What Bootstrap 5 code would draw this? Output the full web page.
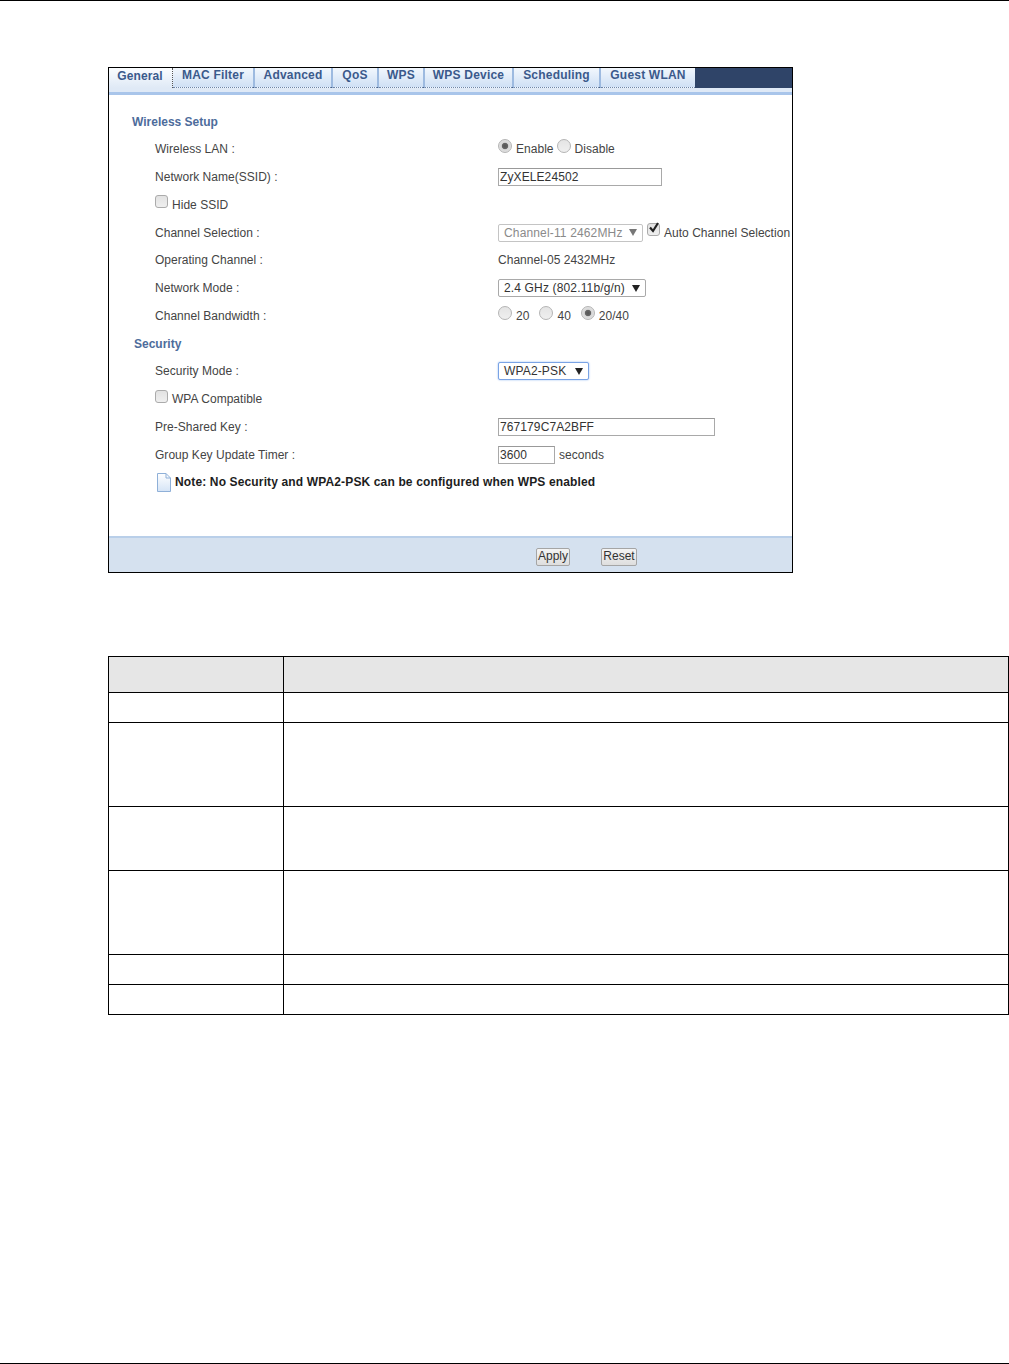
<!DOCTYPE html>
<html lang="en"><head><meta charset="utf-8"><title>Wireless General</title>
<link href="https://cdn.jsdelivr.net/npm/bootstrap@5.3.0/dist/css/bootstrap.min.css" rel="stylesheet">
<style>
body{background:#fff;font-family:"Liberation Sans",Arial,sans-serif;font-size:12px;color:#444;}
.sheet{height:1364px;border-top:1px solid #000;}
.footrule{margin-top:auto;height:1px;background:#000;}
.panel-box{margin:66px 0 0 108px;width:685px;height:506px;border:1px solid #000;background:#fff;}
.tabbar{height:20px;background:#2f4468;flex:none;}
.tab-item{height:20px;background:linear-gradient(#f2f7fd,#cfe0f5);border-right:2px solid #9dbae0;border-bottom:1px dotted #6f86a8;color:#3b5a8c;font-weight:700;letter-spacing:.2px;line-height:14px;padding:0;text-align:center;text-decoration:none;font-size:12px;}
.tab-item.is-on{background:linear-gradient(#fbfdff,#dfe9f6);color:#3b5a8c;border-right:1px dotted #555;border-bottom:0;line-height:15px;padding:1px 1px 0 0;width:64px;letter-spacing:.1px;}
.w1{width:82px}.w2{width:78px}.w3{width:46px}.w4{width:46px}.w5{width:89px}.w6{width:87px}.w7{width:94px;border-right:0}
.strip{height:7px;background:linear-gradient(#dfe9f6 0,#dfe9f6 4px,#a9c5ea 4px,#a9c5ea 100%);flex:none;}
.form-area{padding:12.7px 0 0 0;}
.frow{height:27.75px;padding-left:46px;letter-spacing:.03px;}
.flabel{width:343px;flex:none;}
.fhead{color:#4d6c9b;font-weight:700;letter-spacing:0;}
.h-a{padding-left:23px}.h-b{padding-left:25px}
.box-in{height:18px;border:1px solid #a9a9a9;border-top-color:#999;background:#fff;color:#333;font:12px "Liberation Sans",Arial,sans-serif;padding:0 1px;border-radius:0;letter-spacing:.1px;}
.in-ssid{width:164px}.in-psk{width:217px}.in-time{width:57px}
.drop{display:inline-flex;align-items:center;justify-content:space-between;height:18px;border:1px solid #a9a9a9;border-radius:2px;background:#fff;color:#333;padding:0 5px;letter-spacing:.15px;}
.drop-a{width:145px;color:#8a8a8a;border-color:#c4c4c4}.drop-b{width:148px}.drop-c{width:91px;border-color:#7aa3e5;box-shadow:0 0 2px #8fb5f0}
.tri{width:0;height:0;border-left:4px solid transparent;border-right:4px solid transparent;border-top:7px solid #222;flex:none;}
.drop-a .tri{border-top-color:#777}
.rd{appearance:none;width:14px;height:14px;border-radius:50%;border:1px solid #b4b4b4;background:linear-gradient(#e4e4e4,#efefef);margin:0;flex:none;position:relative;top:-3px;}
.rd:checked{background:radial-gradient(circle,#555 0,#666 2.8px,#d6d6d6 3.6px,#ececec 100%);}
.bw-gap{margin-left:10px}
.lan-gap{margin-left:3px}
.cb{appearance:none;width:13px;height:13px;border-radius:3px;border:1px solid #ababab;background:linear-gradient(#e2e2e2,#efefef);margin:0;flex:none;position:relative;top:-3px;}
.cb:checked{background:linear-gradient(#e2e2e2,#efefef);}
.cbwrap{position:relative;display:inline-flex;flex:none;}
.tick{position:absolute;left:1px;top:-5px;width:12px;height:12px;pointer-events:none;}
.doc{width:15px;height:19px;flex:none;margin-right:4px;}
.noterow{padding-left:47px;color:#1d1d1d;font-weight:700;letter-spacing:.14px;height:27.75px;}
.btm{height:36px;flex:none;background:#d5e1ef;border-top:2px solid #b9cfe9;margin-top:auto;padding:3px 0 0 427px;}
.mini-btn{height:18px;padding:0 1px;border:1px solid #a5a5a5;border-radius:2px;background:linear-gradient(#f4f4f4,#dedede);color:#333;font-size:12px;line-height:15px;letter-spacing:0;--bs-btn-padding-y:0;}
.b-apply{width:34px;margin-right:31px}.b-reset{width:36px}
.desc-table{margin:83px 0 0 108px;width:901px;border-collapse:collapse;table-layout:fixed;}
.desc-table td,.desc-table th{border:1px solid #000;padding:0;background:#fff;box-shadow:none;}
.desc-table .c1{width:175px}
.desc-table th{background:#e6e6e6;}
.r36{height:36px}.r30{height:30px}.r84{height:84px}.r64{height:64px}
</style></head>
<body class="m-0">
<div class="sheet d-flex flex-column">
  <div class="panel-box d-flex flex-column">
    <nav class="tabbar d-flex">
      <a class="tab-item is-on">General</a>
      <a class="tab-item w1">MAC Filter</a>
      <a class="tab-item w2">Advanced</a>
      <a class="tab-item w3">QoS</a>
      <a class="tab-item w4">WPS</a>
      <a class="tab-item w5">WPS Device</a>
      <a class="tab-item w6">Scheduling</a>
      <a class="tab-item w7">Guest WLAN</a>
    </nav>
    <div class="strip"></div>
    <div class="form-area flex-grow-1 d-flex flex-column">
      <div class="frow fhead h-a d-flex align-items-center">Wireless Setup</div>
      <div class="frow d-flex align-items-center"><div class="flabel">Wireless LAN :</div>
        <div class="d-flex align-items-center"><input class="rd" type="radio" name="lan" checked><span class="ms-1">Enable</span><input class="rd lan-gap" type="radio" name="lan"><span class="ms-1">Disable</span></div></div>
      <div class="frow d-flex align-items-center"><div class="flabel">Network Name(SSID) :</div><input class="box-in in-ssid" value="ZyXELE24502"></div>
      <div class="frow d-flex align-items-center"><input class="cb" type="checkbox"><span class="ms-1">Hide SSID</span></div>
      <div class="frow d-flex align-items-center"><div class="flabel">Channel Selection :</div>
        <div class="d-flex align-items-center"><span class="drop drop-a">Channel-11 2462MHz<span class="tri"></span></span>
        <span class="cbwrap ms-1"><input class="cb" type="checkbox" checked><svg class="tick" viewBox="0 0 12 12"><path d="M2 6.5 5 10 10 2" fill="none" stroke="#222" stroke-width="2.2"/></svg></span><span class="ms-1 text-nowrap">Auto Channel Selection</span></div></div>
      <div class="frow d-flex align-items-center"><div class="flabel">Operating Channel :</div><div>Channel-05 2432MHz</div></div>
      <div class="frow d-flex align-items-center"><div class="flabel">Network Mode :</div><span class="drop drop-b">2.4 GHz (802.11b/g/n)<span class="tri"></span></span></div>
      <div class="frow d-flex align-items-center"><div class="flabel">Channel Bandwidth :</div>
        <div class="d-flex align-items-center"><input class="rd" type="radio" name="bw"><span class="ms-1">20</span><input class="rd bw-gap" type="radio" name="bw"><span class="ms-1">40</span><input class="rd bw-gap" type="radio" name="bw" checked><span class="ms-1">20/40</span></div></div>
      <div class="frow fhead h-b d-flex align-items-center">Security</div>
      <div class="frow d-flex align-items-center"><div class="flabel">Security Mode :</div><span class="drop drop-c">WPA2-PSK<span class="tri"></span></span></div>
      <div class="frow d-flex align-items-center"><input class="cb" type="checkbox"><span class="ms-1">WPA Compatible</span></div>
      <div class="frow d-flex align-items-center"><div class="flabel">Pre-Shared Key :</div><input class="box-in in-psk" value="767179C7A2BFF"></div>
      <div class="frow d-flex align-items-center"><div class="flabel">Group Key Update Timer :</div><input class="box-in in-time" value="3600"><span class="ms-1">seconds</span></div>
      <div class="noterow d-flex align-items-center">
        <svg class="doc" viewBox="0 0 15 19"><defs><linearGradient id="dg" x1="0" y1="0" x2="0" y2="1"><stop offset="0" stop-color="#fff"/><stop offset="1" stop-color="#d5e4f6"/></linearGradient></defs><path d="M1.5.5H10L14.5 5V18.5H1.5Z" fill="url(#dg)" stroke="#8fb0d8"/><path d="M10 .5V5H14.5" fill="none" stroke="#8fb0d8"/></svg>
        <span>Note: No Security and WPA2-PSK can be configured when WPS enabled</span></div>
      <div class="btm d-flex align-items-center">
        <button class="btn mini-btn b-apply" type="button">Apply</button>
        <button class="btn mini-btn b-reset" type="button">Reset</button>
      </div>
    </div>
  </div>
  <table class="desc-table">
    <tr class="r36"><th class="c1"></th><th></th></tr>
    <tr class="r30"><td></td><td></td></tr>
    <tr class="r84"><td></td><td></td></tr>
    <tr class="r64"><td></td><td></td></tr>
    <tr class="r84"><td></td><td></td></tr>
    <tr class="r30"><td></td><td></td></tr>
    <tr class="r30"><td></td><td></td></tr>
  </table>
  <div class="footrule"></div>
</div>
</body></html>
